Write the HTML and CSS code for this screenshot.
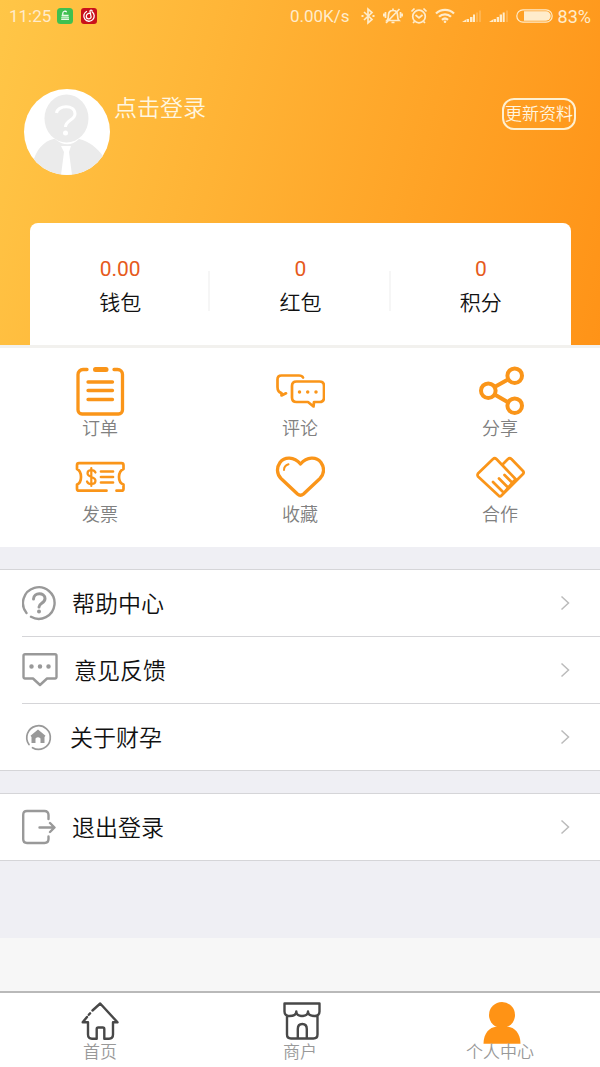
FILE: index.html
```html
<!DOCTYPE html>
<html lang="zh-CN">
<head>
<meta charset="utf-8">
<meta name="viewport" content="width=device-width, initial-scale=1">
<title>个人中心</title>
<link rel="stylesheet" href="styles.css">
</head>
<body>
<header class="hero">
  <div class="status">
    <span class="status-time">11:25</span>
    <div class="status-apps">
      <svg width="16" height="16" viewBox="0 0 16 16"><rect width="16" height="16" rx="3.5" fill="#3fc050"/><path d="M5.800 7V5.200a2 2 0 0 1 3.800-.9" fill="none" stroke="#fff" stroke-width="1.200"/><path d="M4.600 6.800h7v1.700h-7zM4.200 9.200h7.800v1.200H4.200zM4.200 11h7.800v1H4.200z" fill="#e8fbe6"/></svg>
      <svg width="16" height="16" viewBox="0 0 16 16"><rect width="16" height="16" rx="3" fill="#c9101b"/><path d="M5.500 3.500A5.200 5.200 0 1 0 11 3.800M9.500 5.200C7 5 5.300 6.400 5.300 8.500c0 3 4.800 3.200 4.800.2L9 3.600c-.2-1.400 1-1.900 2-1.100" fill="none" stroke="#fff" stroke-width="1.300" stroke-linecap="round"/></svg>
    </div>
    <span class="status-speed">0.00K/s</span>
    <div class="status-icons">
      <svg width="16" height="18" viewBox="0 0 16 18" fill="none" stroke="currentColor" stroke-width="1.700"><path d="M4 5l8 7.500L8 16V2l4 3.500L4 13"/><path d="M1.500 9h2M12.500 9h2" stroke-width="1.800"/></svg>
      <svg width="20" height="18" viewBox="0 0 20 18" fill="none" stroke="currentColor" stroke-width="1.700"><path d="M4 13.500c1.500-1.500 1.500-3 1.500-5.500S7 3.500 10 3.500 14.500 5.500 14.500 8s0 4 1.500 5.500zM8.500 15.500h3M10 1.500v2M3 16L16.500 2M2.500 5v6M.8 6.500v3M17.500 5v6M19.200 6.500v3"/></svg>
      <svg width="18" height="18" viewBox="0 0 18 18" fill="none" stroke="currentColor" stroke-width="1.700"><circle cx="9" cy="9.500" r="6.300"/><path d="M5.500 8L9 10.800 12.500 8M1.500 4.500l3-3M16.500 4.500l-3-3M4.500 14.500L3 16M13.500 14.500L15 16"/></svg>
      <svg width="20" height="16" viewBox="0 0 20 16" fill="none" stroke="currentColor" stroke-width="2.300"><path d="M1 5.500a13 13 0 0 1 18 0M4 8.800a8.500 8.500 0 0 1 12 0M7 11.800a4.500 4.500 0 0 1 6 0"/><circle cx="10" cy="13.800" r="1.300" fill="currentColor" stroke="none"/></svg>
      <svg width="20" height="14" viewBox="0 0 20 14" fill="currentColor"><path d="M0 13l4-2.500V13zM4.500 10H7v3H4.500zM8 8h2.500v5H8zM11 5.500h2V13h-2z"/><path d="M14 3.500h2V13h-2zM17 1.500h2V13h-2z" opacity=".25"/></svg>
      <svg width="20" height="14" viewBox="0 0 20 14" fill="currentColor"><path d="M0 13l4-2.500V13zM4.500 10H7v3H4.500zM7.700 8H10v5H7.700zM10.700 5.500H13V13h-2.300zM13.700 3.500h2V13h-2z"/><path d="M17 1.500h2V13h-2z" opacity=".25"/></svg>
      <svg width="37" height="14" viewBox="0 0 37 14"><rect x=".8" y=".8" width="35.400" height="12.400" rx="6.200" fill="none" stroke="currentColor" stroke-width="1.200"/><path d="M8 2.300h22a4.700 4.700 0 0 1 0 9.400H8z" fill="currentColor"/></svg>
    </div>
    <span class="status-battery">83%</span>
  </div>
  <div class="profile">
    <svg class="avatar" viewBox="0 0 86 86" role="img" aria-label="头像">
      <defs><clipPath id="face"><circle cx="43" cy="43" r="43"/></clipPath></defs>
      <circle cx="43" cy="43" r="43" fill="#fff"/>
      <g clip-path="url(#face)" fill="#ebebeb">
        <path d="M9 74C12 59 23 50 31 50c8 7 17 7 24 0 10 2 18 9 24 17v19H9z"/>
        <ellipse cx="42.500" cy="29.500" rx="22" ry="24"/>
        <path d="M37 57h10l-2 6 3 23H37l3-23z" fill="#fff"/>
        <path d="M32.500 24c1-8 18.500-9 18.500 1 0 6-9.500 6-9.500 13" fill="none" stroke="#fff" stroke-width="3"/>
        <circle cx="41.500" cy="44" r="2.500" fill="#fff"/>
      </g>
    </svg>
    <a class="login" href="#">点击登录</a>
    <button class="update" type="button">更新资料</button>
  </div>
  <section class="stats">
    <a class="stat" href="#"><span class="stat-value">0.00</span><span>钱包</span></a>
    <a class="stat" href="#"><span class="stat-value">0</span><span>红包</span></a>
    <a class="stat" href="#"><span class="stat-value">0</span><span>积分</span></a>
  </section>
</header>
<main class="content">
  <nav class="services">
    <a class="service" href="#">
      <svg class="service-icon" viewBox="0 0 50 50"><path d="M12 3.500H8a5 5 0 0 0-5 5V44a4 4 0 0 0 4 4h36.500a4 4 0 0 0 4-4V8.500a5 5 0 0 0-5-5h-3.500M13 16h24.500M13 24.500h24.500M13 33.500h24.500"/><path d="M20.500 3.500h10.500" stroke-width="5"/></svg>
      <span>订单</span></a>
    <a class="service" href="#">
      <svg class="service-icon thin" viewBox="0 0 50 50"><path d="M28 11.500Q27 9.500 24 9.500H6.500Q2.500 9.500 2.500 13.500V21Q2.500 26 6.500 27v2.500l4.500-2.200M21.500 15.500H44.500Q49 15.500 49 20V31.500Q49 36 44.500 36H39l-.5 4.500-5.500-4.500H21.500Q17 36 17 31.500V20Q17 15.500 21.500 15.500z"/><path d="M24.500 26h0M32.700 26h0M41 26h0" stroke-width="3.500"/></svg>
      <span>评论</span></a>
    <a class="service" href="#">
      <svg class="service-icon thick" viewBox="0 0 50 50"><circle cx="13.300" cy="24.700" r="7.300"/><circle cx="39.700" cy="9.700" r="7.300"/><circle cx="39.700" cy="39.700" r="7.300"/><path d="M20 20.700L33 13.500M20 28.700l13 7.500"/></svg>
      <span>分享</span></a>
    <a class="service" href="#">
      <svg class="service-icon thin" viewBox="0 0 50 50"><path d="M31.500 38.700H4Q2 38.700 2 36.700V32.500Q6 31 6 25T2 17V13.200Q2 11.200 4 11.200H46.500Q48.500 11.200 48.500 13.200V17Q44 19 44 25t4.500 7.500v4.200q0 2-2 2h-5M26 19.500h12M26 25h12M26 30.500h12"/><path d="M20.500 20.500c-1.500-3.500-8-3-8 .8 0 4.400 8 3 8 7.400 0 4.300-7 4.300-8.500.8M16.300 16v18" stroke-width="2.200"/></svg>
      <span>发票</span></a>
    <a class="service" href="#">
      <svg class="service-icon" viewBox="0 0 50 50"><path d="M25.500 12C19 4.500 9.500 4.500 5 10.500 1.500 15.500 1.500 22 6 26.500L22.500 42q3 2.500 6 0L45 26.500C49.500 22 49.500 15.500 46 10.500 41.500 4.500 32 4.500 25.500 12z"/><path d="M9 18q0-4.500 4.500-5.800" stroke-width="2"/></svg>
      <span>收藏</span></a>
    <a class="service" href="#">
      <svg class="service-icon thin" viewBox="0 0 50 50"><path d="M18 7Q19.700 5.500 21.400 7L40.500 27 26.500 43.500Q25 45.500 23.500 43.500L3 24.500Q2 23 3 21.500zM27.500 12.500L33 7q1.700-1.500 3.400 0L48 19q1.300 1.500 0 3L26 44M18 30l9.500 9.500M24 26.500l9 9M29.500 23l8.500 8.500"/></svg>
      <span>合作</span></a>
  </nav>
  <nav class="menu">
    <a class="row" href="#">
      <svg class="row-icon" width="34" height="36" viewBox="0 0 34 36"><path d="M4.500 28A15.800 15.800 0 1 1 9 31.800"/><path d="M11.500 14c0-7 11.500-7 11.500-.5 0 5-6 4.500-6 8.500" stroke-width="3"/><circle cx="17" cy="26.500" r="2" fill="currentColor" stroke="none"/></svg>
      <span class="row-text">帮助中心</span>
      <svg class="chevron" width="10" height="16" viewBox="0 0 10 16"><path d="M1.500 1.500L8.500 8l-7 6.500"/></svg></a>
    <a class="row" href="#">
      <svg class="row-icon" width="36" height="36" viewBox="0 0 36 36"><path d="M3 2.200H33a1.500 1.500 0 0 1 1.500 1.500V25a1.500 1.500 0 0 1-1.500 1.500H25L18 33l-7-6.500H3A1.500 1.500 0 0 1 1.500 25V3.700A1.500 1.500 0 0 1 3 2.200z"/><path d="M9.500 14.500h0M18 14.500h0M26.500 14.500h0" stroke-width="4.500"/></svg>
      <span class="row-text">意见反馈</span>
      <svg class="chevron" width="10" height="16" viewBox="0 0 10 16"><path d="M1.500 1.500L8.500 8l-7 6.500"/></svg></a>
    <a class="row" href="#">
      <svg class="row-icon" width="32" height="36" viewBox="0 0 32 36"><path d="M7 25.500A11.800 11.800 0 1 1 10.500 28.700" stroke-width="1.700"/><path d="M16 10.500l7.500 6.200-1 1.200V24h-4v-4.500q-2.500-2.500-5 0V24h-4v-6.100l-1-1.200z" fill="currentColor" stroke="none"/></svg>
      <span class="row-text">关于财孕</span>
      <svg class="chevron" width="10" height="16" viewBox="0 0 10 16"><path d="M1.500 1.500L8.500 8l-7 6.500"/></svg></a>
  </nav>
  <nav class="menu">
    <a class="row" href="#">
      <svg class="row-icon" width="34" height="36" viewBox="0 0 34 36"><path d="M26.500 10V6Q26.500 2 22.500 2H5Q1.200 2 1.200 6V30Q1.200 34 5 34H22.500Q26.500 34 26.500 30V27.500M17.500 18.500H32M28 14l4.500 4.500L28 23"/></svg>
      <span class="row-text">退出登录</span>
      <svg class="chevron" width="10" height="16" viewBox="0 0 10 16"><path d="M1.500 1.500L8.500 8l-7 6.500"/></svg></a>
  </nav>
</main>
<nav class="tabs">
  <a class="tab" href="#">
    <svg class="tab-icon" viewBox="0 0 40 42"><path d="M12.500 8.500L20.200 1.500 37.500 20.300H33V32.500Q33 36.700 29 36.700H24.300V27Q24.300 25.500 22.800 25.500H18.200Q16.700 25.500 16.700 27V36.700H12Q8 36.700 8 32.500V20.300H2.700L7 15M8.800 12.800l1.300-1.500"/></svg>
    <span>首页</span></a>
  <a class="tab" href="#">
    <svg class="tab-icon" viewBox="0 0 40 42"><path d="M4.500 1.500H39.500V9.500Q39.500 14 34.500 14 28 14 28 9.500 28 14 22 14 16.300 14 16.300 9.500 16.300 14 9.500 14 4.500 14 4.500 9.500zM7 13.500V32.500Q7 36.500 11 36.500H33.500Q37.500 36.500 37.500 32.500V13.500M17.800 36.500V27q0-5 4.500-5t4.500 5V36.500"/></svg>
    <span>商户</span></a>
  <a class="tab" href="#" aria-current="page">
    <svg class="tab-icon active" viewBox="0 0 40 42"><circle cx="22" cy="13" r="13"/><path d="M3.500 41.700C3.500 31 10 25 16 24.700H28C34 25 40.500 31 40.500 41.700z"/></svg>
    <span>个人中心</span></a>
</nav>
</body>
</html>
```
FILE: styles.css
```css
* { box-sizing: border-box; }
body {
  margin: 0;
  min-height: 100vh;
  display: flex;
  flex-direction: column;
  background: #f7f7f7;
  color: #111;
  font-family: Roboto, "Noto Sans CJK SC", sans-serif;
  font-weight: 350;
}
a { color: inherit; text-decoration: none; }
svg { flex: none; display: block; }

.hero {
  background: linear-gradient(105deg, #ffc647, #ff9317);
  color: #fff6e0;
}
.status {
  display: flex;
  align-items: center;
  height: 32px;
  padding: 0 9px;
  font-size: 17px;
  font-weight: 400;
  color: #ffeccb;
}
.status-apps {
  display: flex;
  gap: 8px;
  margin-left: 6px;
}
.status-speed { margin-left: auto; }
.status-battery { font-size: 18px; }
.status-icons {
  display: flex;
  align-items: center;
  gap: 7px;
  margin: 0 5px 0 10px;
}
.profile {
  display: flex;
  align-items: flex-start;
  padding: 57px 24px 48px;
}
.avatar { width: 86px; height: 86px; }
.login {
  margin-left: 4px;
  font-size: 23px;
  line-height: 40px;
}
.update {
  margin: 9px 0 0 auto;
  height: 32px;
  padding: 0 1px;
  border: 2px solid #fff0d0;
  border-radius: 12px;
  background: none;
  color: inherit;
  font: inherit;
  font-size: 17px;
  line-height: 28px;
  white-space: nowrap;
}
.stats {
  display: grid;
  grid-template-columns: repeat(3, 1fr);
  margin: 0 29px 0 30px;
  padding: 29px 0 25px;
  border-radius: 8px 8px 0 0;
  background: #fff;
  color: #111;
}
.stat {
  display: flex;
  flex-direction: column;
  align-items: center;
  font-size: 21px;
  line-height: 34px;
  background: linear-gradient(#f6f6f6, #f6f6f6) right 19px / 2px 40px no-repeat;
}
.stat:last-child { background: none; }
.stat-value {
  color: #e65a1c;
  font-weight: 400;
}

.content {
  flex: 1 0 auto;
  margin-bottom: 53px;
  background: #efeff4;
}
.services {
  display: grid;
  grid-template-columns: repeat(3, 1fr);
  row-gap: 10px;
  padding: 18px 0 19px;
  border-top: 3px solid #f2f1ee;
  background: #fff;
}
.service {
  display: flex;
  flex-direction: column;
  align-items: center;
  font-size: 18px;
  line-height: 26px;
  color: #808080;
}
.service-icon {
  width: 50px;
  height: 50px;
  fill: none;
  stroke: #fa9519;
  stroke-width: 3.3;
  stroke-linecap: round;
  stroke-linejoin: round;
}
.service-icon.thin { stroke-width: 2.7; }
.service-icon.thick { stroke-width: 4; }

.menu {
  margin-top: 22px;
  padding-left: 22px;
  border: solid #d5d5d8;
  border-width: 1px 0;
  background: #fff;
}
.row {
  display: flex;
  align-items: center;
  height: 66px;
  padding-right: 30px;
}
.row + .row {
  height: 67px;
  border-top: 1px solid #d5d5d8;
}
.row-icon {
  fill: none;
  color: #999;
  stroke: currentColor;
  stroke-width: 2.4;
  stroke-linecap: round;
  stroke-linejoin: round;
}
.row-text {
  flex: 1;
  margin-left: 16px;
  padding-bottom: 3px;
  font-size: 23px;
}
.chevron {
  fill: none;
  stroke: #bbb;
  stroke-width: 1.5;
}

.tabs {
  display: grid;
  grid-template-columns: repeat(3, 1fr);
  padding: 9px 0 6px;
  border-top: 2px solid #b9b9b9;
  background: #fff;
}
.tab {
  display: flex;
  flex-direction: column;
  align-items: center;
  font-size: 17px;
  line-height: 17px;
  color: #999;
}
.tab-icon {
  width: 40px;
  height: 42px;
  overflow: visible;
  fill: none;
  stroke: #484848;
  stroke-width: 2.4;
  stroke-linecap: round;
  stroke-linejoin: round;
}
.tab-icon.active {
  fill: #ff9315;
  stroke: none;
}
```
